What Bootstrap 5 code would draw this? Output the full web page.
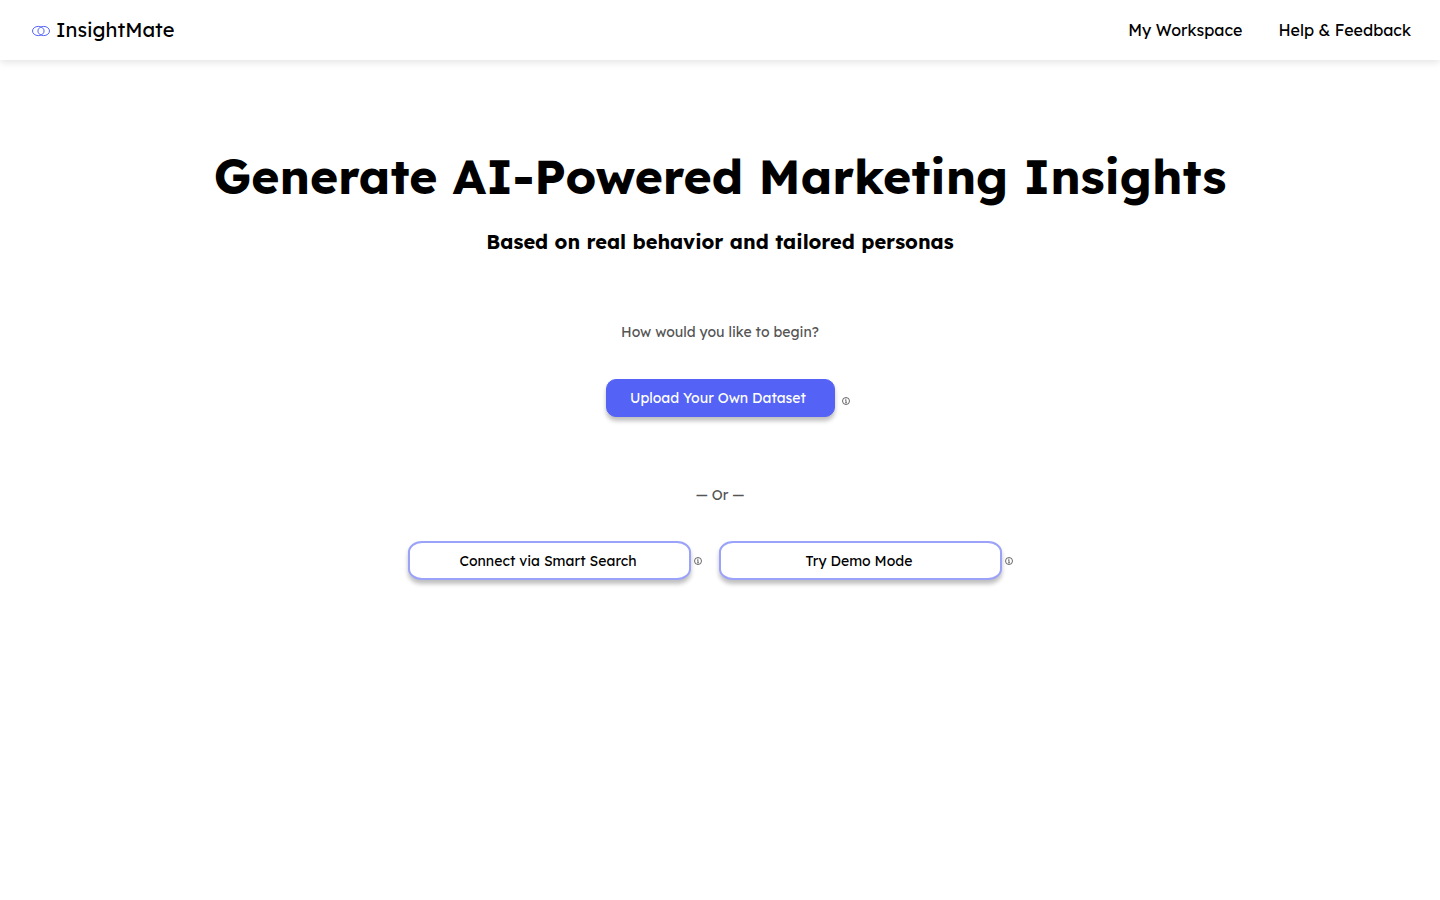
<!DOCTYPE html>
<html lang="en">
<head>
<meta charset="utf-8">
<meta name="viewport" content="width=device-width, initial-scale=1">
<title>InsightMate</title>
<link href="https://cdn.jsdelivr.net/npm/bootstrap@5.3.0/dist/css/bootstrap.min.css" rel="stylesheet">
<style>
  body { font-family: Lexend, Inter, sans-serif; color: #000; background: #fff; }
  .topbar { min-height: 60px; padding: 0 29px 0 32px; box-shadow: 0 2px 8px rgba(0, 0, 0, .12); }
  .topbar .navbar-brand { font-size: 20px; line-height: 30px; gap: 6px; color: #000; }
  .topbar .nav-link { font-size: 16px; line-height: 24px; color: #000; }
  .menu { gap: 36px; }
  .hero { padding-top: 86px; padding-bottom: 48px; }
  .hero h1 { font-size: 48px; line-height: 60px; font-weight: 700; margin-bottom: 23px; }
  .hero h2 { font-size: 20px; line-height: 26px; font-weight: 700; margin-bottom: 67px; }
  .prompt { font-size: 14px; line-height: 20px; color: #555; }
  .action { font-size: 14px; line-height: 20px; box-shadow: 0 4px 4px rgba(0, 0, 0, .25); }
  .action-main { --bs-btn-bg: #5463f6; --bs-btn-border-color: #5463f6; --bs-btn-color: #fff; --bs-btn-hover-bg: #4352e0; --bs-btn-hover-color: #fff; width: 229px; height: 38px; padding: 0 26px 0 22px; border-radius: 10px; }
  .action-alt { --bs-btn-bg: #fff; --bs-btn-border-color: #9aa2fa; --bs-btn-border-width: 2px; --bs-btn-color: #000; --bs-btn-hover-bg: #f3f4ff; --bs-btn-hover-color: #000; width: 283px; height: 39px; padding: 0 26px 0 24px; border-radius: 14px / 11px; }
  .hint { width: 8px; height: 8px; }
  .hint svg, .navbar-brand svg { display: block; }
  .main-row { gap: 7px; margin: 37px 0 68px; padding-left: 15px; }
  .main-row .hint { margin-top: 6px; }
  .alt-row { column-gap: 17px; row-gap: 24px; margin-top: 36px; padding-right: 20px; }
  .alt-item { gap: 3px; }
</style>
</head>
<body>
<nav class="navbar topbar">
  <a class="navbar-brand d-flex align-items-center m-0 p-0" href="#">
    <svg width="18" height="14" viewBox="0 -2 18 14" fill="none" stroke="#5463f6" aria-hidden="true"><ellipse cx="6.3" cy="6" rx="5.8" ry="4.6"/><ellipse cx="11.7" cy="6" rx="5.8" ry="4.6"/></svg>
    <span>InsightMate</span>
  </a>
  <div class="menu d-flex flex-wrap">
    <a class="nav-link" href="#">My Workspace</a>
    <a class="nav-link" href="#">Help &amp; Feedback</a>
  </div>
</nav>
<main class="hero container-fluid text-center">
  <h1>Generate AI-Powered Marketing Insights</h1>
  <h2>Based on real behavior and tailored personas</h2>
  <p class="prompt mb-0">How would you like to begin?</p>
  <div class="main-row d-flex justify-content-center align-items-center">
    <button type="button" class="btn action action-main text-nowrap">Upload Your Own Dataset</button>
    <span class="hint"><svg width="8" height="8" viewBox="0 0 8 8" fill="none" stroke="#444" stroke-width=".8" aria-hidden="true"><circle cx="4" cy="4" r="3.5"/><path d="M3.3 3.2H4V5.8M3.2 5.8H4.8M3.4 2.2H4.4"/></svg></span>
  </div>
  <p class="prompt mb-0">— Or —</p>
  <div class="alt-row d-flex flex-wrap justify-content-center">
    <div class="alt-item d-flex align-items-center">
      <button type="button" class="btn action action-alt">Connect via Smart Search</button>
      <span class="hint"><svg width="8" height="8" viewBox="0 0 8 8" fill="none" stroke="#444" stroke-width=".8" aria-hidden="true"><circle cx="4" cy="4" r="3.5"/><path d="M3.3 3.2H4V5.8M3.2 5.8H4.8M3.4 2.2H4.4"/></svg></span>
    </div>
    <div class="alt-item d-flex align-items-center">
      <button type="button" class="btn action action-alt">Try Demo Mode</button>
      <span class="hint"><svg width="8" height="8" viewBox="0 0 8 8" fill="none" stroke="#444" stroke-width=".8" aria-hidden="true"><circle cx="4" cy="4" r="3.5"/><path d="M3.3 3.2H4V5.8M3.2 5.8H4.8M3.4 2.2H4.4"/></svg></span>
    </div>
  </div>
</main>
<script src="https://cdn.jsdelivr.net/npm/bootstrap@5.3.0/dist/js/bootstrap.bundle.min.js"></script>
</body>
</html>
